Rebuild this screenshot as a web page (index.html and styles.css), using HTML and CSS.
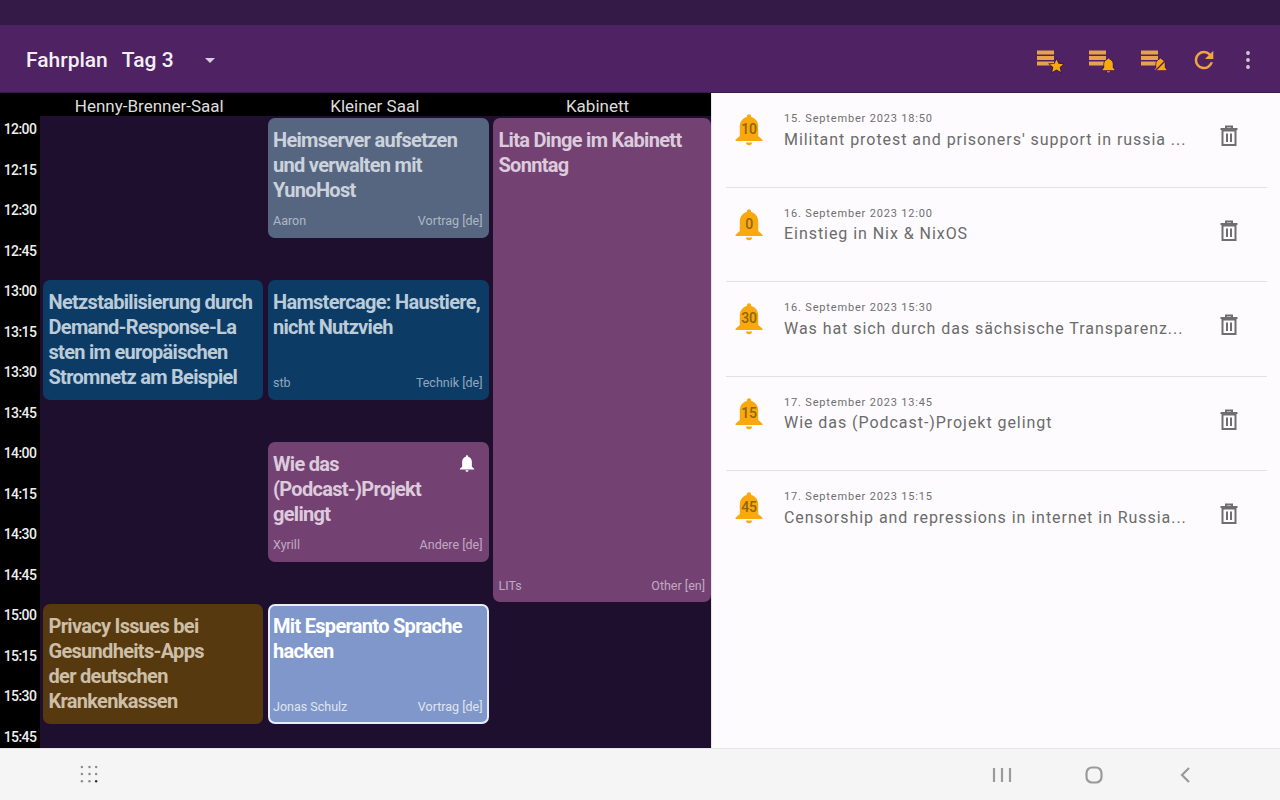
FILE: index.html
```html
<!DOCTYPE html>
<html lang="de">
<head>
    <meta charset="UTF-8">
    <meta name="viewport" content="width=device-width, initial-scale=1.0">
    <title>Fahrplan</title>
    <link rel="stylesheet" href="styles.css">
</head>
<body>
    <svg class="icon-defs" width="0" height="0">
        <defs>
            <symbol id="bell" viewBox="0 0 24 24">
                <path d="M12 1.500c-.9 0-1.500.6-1.500 1.500v.6C7 4.500 5.500 7.300 5.500 10.500V17L2.500 19.600V20.500h19v-.9L18.500 17v-6.500c0-3.200-1.500-6-5-6.900V3c0-.9-.6-1.500-1.500-1.500z"/>
                <path d="M9.800 21.500h4.400c0 1.100-1 2-2.200 2s-2.200-.9-2.200-2z"/>
            </symbol>
            <symbol id="lines" viewBox="0 0 24 24">
                <path d="M1 4.500h17v4H1zM1 10h17v4H1zM1 15.500h17v4H1z"/>
            </symbol>
            <symbol id="trash" viewBox="0 0 24 24">
                <path fill="none" stroke="currentColor" stroke-width="2" d="M5.500 6.500h13V21h-13zM3.500 5h17M9 4.500V2.500h6v2M10 9.500V18M14 9.500V18"/>
            </symbol>
        </defs>
    </svg>

    <div class="status-bar"></div>

    <header class="app-bar">
        <span class="app-title">Fahrplan</span>
        <span class="day-select">Tag 3</span>
        <span class="day-arrow"></span>
        <div class="actions">
            <svg class="action-icon" viewBox="0 0 28 28">
                <use href="#lines" width="24" height="24"/>
                <path class="badge" d="M20.500 13.500l2 4.300 4.700.4-3.500 3.100 1 4.600-4.200-2.400-4.200 2.400 1-4.600-3.500-3.100 4.700-.4z"/>
            </svg>
            <svg class="action-icon" viewBox="0 0 28 28">
                <use href="#lines" width="24" height="24"/>
                <path class="badge" d="M20.500 12.500c-.7 0-1.100.5-1.100 1.100-2.200.6-3.200 2.400-3.200 4.500v3.700l-1.700 1.700v.8h12v-.8l-1.700-1.700v-3.700c0-2.100-1-3.900-3.200-4.500 0-.6-.4-1.100-1.100-1.100zM19 25.200h3c0 .8-.7 1.400-1.500 1.400s-1.500-.6-1.500-1.400z"/>
            </svg>
            <svg class="action-icon" viewBox="0 0 28 28">
                <use href="#lines" width="24" height="24"/>
                <path class="badge" d="M20.500 12.500c-.7 0-1.100.5-1.100 1.100-2.200.6-3.200 2.400-3.200 4.500v3.700l-1.700 1.700v.8h12v-.8l-1.700-1.700v-3.700c0-2.100-1-3.900-3.200-4.500 0-.6-.4-1.100-1.100-1.100z"/>
                <path class="slash" d="M14 26L27 13"/>
            </svg>
            <svg class="action-icon refresh" viewBox="0 0 24 24">
                <path d="M18.600 5.400A9.300 9.300 0 0 0 12 2.700a9.300 9.300 0 1 0 9 11.600h-2.600A6.800 6.800 0 1 1 12 5.200c1.900 0 3.500.8 4.700 2L13 11h8.300V2.700z"/>
            </svg>
            <svg class="overflow-icon" viewBox="0 0 6 20">
                <circle cx="3" cy="3" r="1.900"/>
                <circle cx="3" cy="10" r="1.900"/>
                <circle cx="3" cy="17" r="1.900"/>
            </svg>
        </div>
    </header>

    <main class="content">
        <section class="schedule">
            <div class="times">
                <span>12:00</span><span>12:15</span><span>12:30</span><span>12:45</span>
                <span>13:00</span><span>13:15</span><span>13:30</span><span>13:45</span>
                <span>14:00</span><span>14:15</span><span>14:30</span><span>14:45</span>
                <span>15:00</span><span>15:15</span><span>15:30</span><span>15:45</span>
            </div>
            <div class="rooms">
                <div class="room-names">
                    <span>Henny-Brenner-Saal</span>
                    <span>Kleiner Saal</span>
                    <span>Kabinett</span>
                </div>
                <div class="slots">
                    <article class="event event-green room-1 row-5">
                        <h3>Netzstabilisierung durch Demand-Response-La sten im europäischen Stromnetz am Beispiel</h3>
                    </article>
                    <article class="event event-brown room-1 row-13">
                        <h3>Privacy Issues bei<br>Gesundheits-Apps<br>der deutschen<br>Krankenkassen</h3>
                    </article>

                    <article class="event event-grey room-2 row-1">
                        <h3>Heimserver aufsetzen und verwalten mit YunoHost</h3>
                        <div class="event-meta"><span>Aaron</span><span>Vortrag [de]</span></div>
                    </article>
                    <article class="event event-green room-2 row-5">
                        <h3>Hamstercage: Haustiere, nicht Nutzvieh</h3>
                        <div class="event-meta"><span>stb</span><span>Technik [de]</span></div>
                    </article>
                    <article class="event event-purple room-2 row-9">
                        <h3>Wie das (Podcast-)Projekt gelingt</h3>
                        <svg class="event-bell"><use href="#bell"/></svg>
                        <div class="event-meta"><span>Xyrill</span><span>Andere [de]</span></div>
                    </article>
                    <article class="event event-active room-2 row-13">
                        <h3>Mit Esperanto Sprache hacken</h3>
                        <div class="event-meta"><span>Jonas Schulz</span><span>Vortrag [de]</span></div>
                    </article>

                    <article class="event event-purple event-long room-3 row-1">
                        <h3>Lita Dinge im Kabinett Sonntag</h3>
                        <div class="event-meta"><span>LITs</span><span>Other [en]</span></div>
                    </article>
                </div>
            </div>
        </section>

        <section class="alarms">
            <div class="alarm">
                <div class="alarm-bell"><svg><use href="#bell"/></svg><span>10</span></div>
                <div class="alarm-text">
                    <div class="alarm-date">15. September 2023 18:50</div>
                    <div class="alarm-title">Militant protest and prisoners' support in russia ...</div>
                </div>
                <svg class="trash"><use href="#trash"/></svg>
            </div>
            <div class="alarm">
                <div class="alarm-bell"><svg><use href="#bell"/></svg><span>0</span></div>
                <div class="alarm-text">
                    <div class="alarm-date">16. September 2023 12:00</div>
                    <div class="alarm-title">Einstieg in Nix &amp; NixOS</div>
                </div>
                <svg class="trash"><use href="#trash"/></svg>
            </div>
            <div class="alarm">
                <div class="alarm-bell"><svg><use href="#bell"/></svg><span>30</span></div>
                <div class="alarm-text">
                    <div class="alarm-date">16. September 2023 15:30</div>
                    <div class="alarm-title">Was hat sich durch das sächsische Transparenz...</div>
                </div>
                <svg class="trash"><use href="#trash"/></svg>
            </div>
            <div class="alarm">
                <div class="alarm-bell"><svg><use href="#bell"/></svg><span>15</span></div>
                <div class="alarm-text">
                    <div class="alarm-date">17. September 2023 13:45</div>
                    <div class="alarm-title">Wie das (Podcast-)Projekt gelingt</div>
                </div>
                <svg class="trash"><use href="#trash"/></svg>
            </div>
            <div class="alarm">
                <div class="alarm-bell"><svg><use href="#bell"/></svg><span>45</span></div>
                <div class="alarm-text">
                    <div class="alarm-date">17. September 2023 15:15</div>
                    <div class="alarm-title">Censorship and repressions in internet in Russia...</div>
                </div>
                <svg class="trash"><use href="#trash"/></svg>
            </div>
        </section>
    </main>

    <footer class="nav-bar">
        <svg class="nav-apps" viewBox="0 0 20 20">
            <g fill="#8c8c8c">
                <circle cx="2" cy="2" r="1.300"/><circle cx="10" cy="2" r="1.300"/><circle cx="17" cy="2" r="1.300"/>
                <circle cx="2" cy="9.500" r="1.300"/><circle cx="10" cy="9.500" r="1.300"/><circle cx="17" cy="9.500" r="1.300"/>
                <circle cx="2" cy="17" r="1.300"/><circle cx="10" cy="17" r="1.300"/><circle cx="17" cy="17" r="1.300" fill="#333"/>
            </g>
        </svg>
        <div class="nav-keys">
            <svg viewBox="0 0 20 18"><path d="M2 2v14M10 2v14M18 2v14"/></svg>
            <svg viewBox="0 0 20 18"><rect x="2.500" y="1.500" width="15" height="15" rx="5.500"/></svg>
            <svg viewBox="0 0 20 18"><path d="M13 2L6 9l7 7"/></svg>
        </div>
    </footer>
</body>
</html>
```

FILE: styles.css
```css
* {
    box-sizing: border-box;
}

html, body {
    margin: 0;
    height: 100%;
}

body {
    display: flex;
    flex-direction: column;
    height: 800px;
    overflow: hidden;
    font-family: Roboto, "Liberation Sans", sans-serif;
    background-color: #fdfbfe;
}

.icon-defs {
    position: absolute;
}

.status-bar {
    height: 25px;
    background-color: #341a46;
}

/* app bar */
.app-bar {
    display: flex;
    align-items: center;
    height: 68px;
    padding: 3px 29px 0 26px;
    background-color: #4f2263;
    color: #f3eef5;
    font-size: 21px;
    font-weight: 500;
    border-bottom: 1px solid #3c1650;
}

.day-select {
    margin-left: 14px;
}

.day-arrow {
    width: 0;
    height: 0;
    margin-left: 31px;
    border-left: 5px solid transparent;
    border-right: 5px solid transparent;
    border-top: 5px solid #d8cfdd;
}

.actions {
    display: flex;
    align-items: center;
    gap: 24px;
    margin-left: auto;
}

.action-icon {
    width: 28px;
    height: 28px;
    fill: #e5a352;
}

.action-icon .badge {
    fill: #f9a80d;
    stroke: #3a1650;
    stroke-width: 1.500;
    paint-order: stroke;
}

.action-icon .slash {
    stroke: #4f2263;
    stroke-width: 1.500;
    fill: none;
}

.action-icon.refresh {
    width: 24px;
    height: 24px;
    fill: #f0a63c;
}

.overflow-icon {
    width: 6px;
    height: 20px;
    margin-left: 5px;
    fill: #d4cada;
}

/* main area */
.content {
    display: flex;
    flex: 1;
    min-height: 0;
}

.schedule {
    display: flex;
    width: 711px;
    background-color: #000;
    overflow: hidden;
}

.times {
    display: grid;
    grid-template-rows: repeat(16, 40.5px);
    width: 40px;
    padding-top: 28px;
    flex-shrink: 0;
    color: #eee;
    font-size: 14px;
    font-weight: 500;
    letter-spacing: -0.6px;
    text-align: center;
}

.rooms {
    flex: 1;
    min-width: 0;
}

.room-names {
    display: grid;
    grid-template-columns: 225.5px 225.5px 220px;
    height: 23px;
    color: #ddd;
    font-size: 17px;
    line-height: 26px;
    text-align: center;
}

.room-names span {
    padding-right: 7px;
}

.slots {
    display: grid;
    grid-template-columns: 225.5px 225.5px 220px;
    grid-template-rows: repeat(16, 40.5px);
    background-color: #1f0f2e;
}

/* sessions */
.event {
    position: relative;
    display: flex;
    flex-direction: column;
    margin: 2px 2.5px 0 2px;
    padding: 10px 6px 8.5px 5.5px;
    border-radius: 7px;
    min-width: 0;
}

.event h3 {
    margin: 0;
    font-size: 20px;
    font-weight: 700;
    line-height: 25px;
    letter-spacing: -0.7px;
    overflow-wrap: anywhere;
}

.room-1 {
    grid-column: 1;
    margin-left: 3px;
}

.room-2 { grid-column: 2; }
.room-3 { grid-column: 3; }

.row-1 { grid-row: 1 / span 3; }
.row-5 { grid-row: 5 / span 3; }
.row-9 { grid-row: 9 / span 3; }
.row-13 { grid-row: 13 / span 3; }

.event-long {
    grid-row: 1 / span 12;
    margin-right: 0;
}

.event-meta {
    display: flex;
    justify-content: space-between;
    margin-top: auto;
    font-size: 12.5px;
    line-height: 16px;
    opacity: 0.75;
}

.event-green {
    background-color: #0c3c66;
    color: #bccbd8;
}

.event-brown {
    background-color: #56390f;
    color: #cdbea6;
}

.event-grey {
    background-color: #566680;
    color: #ccd2dc;
}

.event-purple {
    background-color: #734273;
    color: #dccbdc;
}

.event-active {
    background-color: #7f97ca;
    color: #fff;
    border: 2px solid #e8edf6;
    padding: 8px 4px 6.5px 3.5px;
}

.event-bell {
    position: absolute;
    top: 12px;
    right: 13px;
    width: 18px;
    height: 18px;
    fill: #fff;
}

/* alarm list */
.alarms {
    flex: 1;
    padding: 0 13px 0 14px;
    background-color: #fdfbfe;
    border-left: 1px solid #e8e4ea;
}

.alarm {
    display: flex;
    align-items: flex-start;
    height: 94.5px;
    padding-top: 18px;
    border-bottom: 1px solid #e2e2e2;
}

.alarm:last-child {
    border-bottom: 0;
}

.alarm-bell {
    position: relative;
    width: 46px;
    height: 34px;
    flex-shrink: 0;
    margin-top: 1px;
    fill: #f9a80d;
}

.alarm-bell svg {
    display: block;
    width: 34px;
    height: 34px;
    margin: 0 auto;
}

.alarm-bell span {
    position: absolute;
    top: 9px;
    left: 0;
    right: 0;
    color: #8f6508;
    font-size: 14px;
    font-weight: 500;
    letter-spacing: -0.3px;
    text-align: center;
}

.alarm-text {
    width: 420px;
    margin-left: 12px;
}

.alarm-date {
    color: #6f6f6f;
    font-size: 11px;
    line-height: 15px;
    letter-spacing: 0.83px;
}

.alarm-title {
    margin-top: 2.5px;
    color: #6b6b6b;
    font-size: 16px;
    line-height: 21px;
    letter-spacing: 0.95px;
    white-space: nowrap;
}

.trash {
    width: 24px;
    height: 24px;
    margin: 13px 0 0 13px;
    color: #6e6e6e;
}

/* system navigation */
.nav-bar {
    display: flex;
    align-items: center;
    justify-content: space-between;
    height: 52px;
    padding: 0 84px 0 80px;
    background-color: #f5f5f5;
    border-top: 1px solid #e6e6e6;
}

.nav-apps {
    width: 19px;
    height: 19px;
}

.nav-keys {
    display: flex;
    align-items: center;
    gap: 72px;
}

.nav-keys svg {
    width: 20px;
    height: 18px;
    fill: none;
    stroke: #9a9a9a;
    stroke-width: 2.2;
}
```
